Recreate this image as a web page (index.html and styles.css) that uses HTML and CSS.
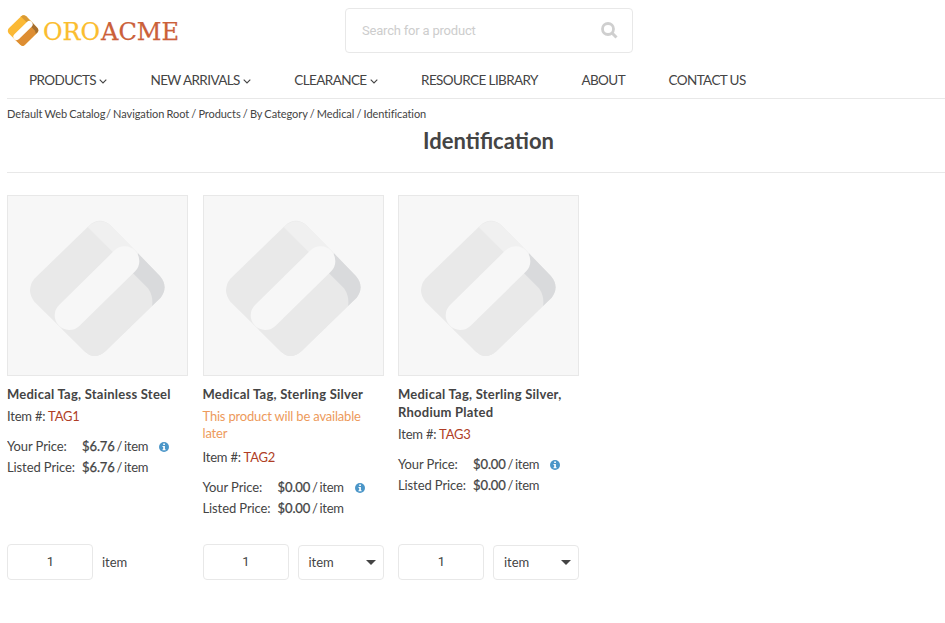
FILE: index.html
```html
<!DOCTYPE html>
<html lang="en">
<head>
<meta charset="utf-8">
<title>Identification</title>
<link rel="stylesheet" href="styles.css">
</head>
<body>
<svg class="defs" aria-hidden="true">
  <symbol id="mark" viewBox="88 105 408 410">
    <path class="m-base" d="M104 281L268 122Q300 93 334 122L480 272Q508 305 483 338L318 498Q287 528 256 500L104 350Q78 315 104 281Z"/>
    <path class="m-low" d="M419 225L402 266L445 310Q462 335 457 362L318 498Q287 528 256 500L188 433Z"/>
    <path class="m-light" d="M264 126Q300 93 334 122L420 210L340 202Z"/>
    <path class="m-dark" d="M415 205L480 272Q508 305 483 338L457 363Q462 335 445 310L400 265Z"/>
    <path class="m-pill" d="M375 228L209 391"/>
  </symbol>
  <symbol id="info" viewBox="0 0 10 10">
    <circle cx="5" cy="5" r="5" fill="#4b96c8"/>
    <path d="M4.2 1.5h1.7v1.4H4.2zM3.5 4h2.4v3.2h.7v1.1H3.5V7.200h.7V5.100h-.7z" fill="#fff"/>
  </symbol>
</svg>
<header class="header">
  <a class="logo">
    <svg class="logo-mark"><use href="#mark"/></svg>
    <svg class="logo-text" width="144" height="36">
      <text x="0" y="25" textLength="57" lengthAdjust="spacingAndGlyphs" fill="#fbbd2f" stroke="#fbbd2f">ORO</text>
      <text x="58" y="25" textLength="78" lengthAdjust="spacingAndGlyphs" fill="#cb6039" stroke="#cb6039">ACME</text>
    </svg>
  </a>
  <div class="search">
    <input type="text" placeholder="Search for a product">
    <svg width="17" height="17" viewBox="0 0 17 17" fill="none" stroke="#cfcfcf"><circle cx="7" cy="7" r="5.500" stroke-width="2.800"/><path d="M11 11l4.500 4.500" stroke-width="3"/></svg>
  </div>
</header>
<nav class="nav">
  <a>PRODUCTS<svg class="chev" viewBox="0 0 8 5"><path d="M.7.7L4 4L7.300.7"/></svg></a>
  <a>NEW ARRIVALS<svg class="chev" viewBox="0 0 8 5"><path d="M.7.7L4 4L7.300.7"/></svg></a>
  <a>CLEARANCE<svg class="chev" viewBox="0 0 8 5"><path d="M.7.7L4 4L7.300.7"/></svg></a>
  <a>RESOURCE LIBRARY</a>
  <a>ABOUT</a>
  <a>CONTACT US</a>
</nav>
<div class="crumbs">Default Web Catalog&#8202;/ Navigation Root / Products / By Category / Medical / Identification</div>
<h1>Identification</h1>
<main class="grid">
  <article class="card">
    <div class="photo"><svg><use href="#mark"/></svg></div>
    <h2>Medical Tag, Stainless Steel</h2>
    <p class="sku">Item #: <b>TAG1</b></p>
    <dl class="prices">
      <dt>Your Price:</dt><dd><b>$6.76</b> / item<svg class="info"><use href="#info"/></svg></dd>
      <dt>Listed Price:</dt><dd><b>$6.76</b> / item</dd>
    </dl>
    <div class="order"><input class="qty" value="1"><span class="unit">item</span></div>
  </article>
  <article class="card">
    <div class="photo"><svg><use href="#mark"/></svg></div>
    <h2>Medical Tag, Sterling Silver</h2>
    <p class="notice">This product will be available later</p>
    <p class="sku">Item #: <b>TAG2</b></p>
    <dl class="prices">
      <dt>Your Price:</dt><dd><b>$0.00</b> / item<svg class="info"><use href="#info"/></svg></dd>
      <dt>Listed Price:</dt><dd><b>$0.00</b> / item</dd>
    </dl>
    <div class="order"><input class="qty" value="1"><div class="select">item<i></i></div></div>
  </article>
  <article class="card">
    <div class="photo"><svg><use href="#mark"/></svg></div>
    <h2>Medical Tag, Sterling Silver, Rhodium Plated</h2>
    <p class="sku">Item #: <b>TAG3</b></p>
    <dl class="prices">
      <dt>Your Price:</dt><dd><b>$0.00</b> / item<svg class="info"><use href="#info"/></svg></dd>
      <dt>Listed Price:</dt><dd><b>$0.00</b> / item</dd>
    </dl>
    <div class="order"><input class="qty" value="1"><div class="select">item<i></i></div></div>
  </article>
</main>
</body>
</html>
```
FILE: styles.css
```css
* { box-sizing: border-box; }
body {
  margin: 0 0 0 7px;
  background: #fff;
  color: #444;
  font: 13px/18px Lato, sans-serif;
  overflow: hidden;
}
h1, h2, p, dl, dd { margin: 0; }
.defs { position: absolute; width: 0; height: 0; }
.m-base { fill: var(--base); }
.m-low { fill: var(--low); }
.m-light { fill: var(--light); }
.m-dark { fill: var(--dark); }
.m-pill { stroke: var(--pill); stroke-width: 88; stroke-linecap: round; }

.header { display: flex; height: 61px; }
.logo { display: flex; width: 338px; padding-top: 15px; }
.logo-mark {
  --base: #fbb935;
  --low: #dd8d32;
  --light: #d99a35;
  --dark: #a66e2e;
  --pill: #fff;
  width: 32px;
  height: 31px;
}
.logo-text { margin-left: 4px; overflow: visible; font: 25px "DejaVu Serif", serif; stroke-width: .25px; }
.search {
  display: flex;
  align-items: center;
  width: 288px;
  height: 45px;
  margin-top: 8px;
  padding: 0 14px 0 16px;
  border: 1px solid #e8e8e8;
  border-radius: 4px;
}
.search input {
  flex: 1;
  min-width: 0;
  padding: 0;
  border: 0;
  outline: 0;
  font: 13px Roboto, sans-serif;
  letter-spacing: -.2px;
}
.search input::placeholder { color: #cdcdcd; opacity: 1; }

.nav {
  display: flex;
  height: 38px;
  padding: 10px 0 0 22px;
  border-bottom: 1px solid #e8e8e8;
  font-size: 13.5px;
  line-height: 19px;
  letter-spacing: -.6px;
  white-space: nowrap;
}
.nav a { margin-right: 43.5px; }
.chev { width: 8px; height: 5px; margin: 0 0 1px 3px; fill: none; stroke: #444; stroke-width: 1.1; }

.crumbs { height: 27px; padding-top: 6px; font-size: 11px; letter-spacing: -.08px; word-spacing: -.5px; }
h1 {
  height: 47px;
  padding-left: 25px;
  border-bottom: 1px solid #e8e8e8;
  font-size: 22px;
  line-height: 30px;
  font-weight: 700;
  text-align: center;
}

.grid { display: grid; grid-template-columns: repeat(3, 181px); column-gap: 14.5px; padding-top: 22px; }
.card { display: flex; flex-direction: column; height: 385px; }
.photo {
  --base: #e9e9e9;
  --low: #e9e9e9;
  --light: #f0f0f0;
  --dark: #d9dadc;
  --pill: #f7f7f7;
  flex: none;
  height: 181px;
  padding: 23.500px 0 0 21px;
  border: 1px solid #e8e8e8;
  background: #f7f7f7;
}
.photo svg { display: block; width: 136px; height: 136.700px; }
h2 { margin-top: 9px; font-size: 13px; line-height: 18px; font-weight: 700; letter-spacing: .24px; white-space: normal; }
.notice { margin-top: 5px; color: #ed9a5b; line-height: 17px; letter-spacing: -.19px; }
.sku { margin-top: 4px; letter-spacing: -.2px; }
.notice + .sku { margin-top: 6px; }
.sku b { color: #b03e26; font-weight: 400; }
.prices {
  display: grid;
  grid-template-columns: 75px 1fr;
  margin-top: 11px;
  line-height: 21px;
  letter-spacing: -.1px;
}
.prices dd { word-spacing: -1.3px; letter-spacing: -.25px; }
.prices b { font-weight: 400; letter-spacing: -.1px; -webkit-text-stroke: .25px #444; }
.info { width: 10px; height: 10px; margin-left: 11px; vertical-align: -1px; }
.order { display: flex; gap: 9px; align-items: flex-end; margin-top: auto; }
.qty, .select { width: 86px; border: 1px solid #e8e8e8; border-radius: 4px; }
.qty {
  height: 36px;
  padding: 0 0 2px 1px;
  color: #444;
  font: 13px Roboto, sans-serif;
  text-align: center;
}
.select {
  display: flex;
  align-items: center;
  justify-content: space-between;
  height: 35px;
  padding: 0 7px 1px 10px;
}
.select i { border: 5px solid transparent; border-top-color: #444; border-bottom: 0; }
.unit { line-height: 36px; }
```
